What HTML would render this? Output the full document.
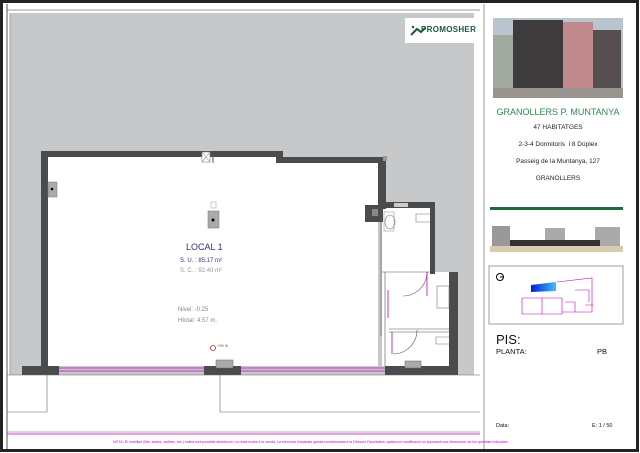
<!DOCTYPE html>
<html><head><meta charset="utf-8"><style>
html,body{margin:0;padding:0;}
body{width:640px;height:453px;position:relative;overflow:hidden;background:#fff;font-family:"Liberation Sans",Arial,sans-serif;}
.t{position:absolute;white-space:nowrap;}
</style></head><body>
<svg width="640" height="453" style="position:absolute;left:0;top:0">
<!-- outer border -->
<rect x="0" y="0" width="640" height="453" fill="#fff"/>
<rect x="1.5" y="1.5" width="636" height="449" fill="none" stroke="#222" stroke-width="3"/>
<line x1="7" y1="10" x2="480" y2="10" stroke="#777" stroke-width="0.8"/>
<line x1="7" y1="4" x2="7" y2="449" stroke="#555" stroke-width="1"/>
<line x1="484" y1="4" x2="484" y2="449" stroke="#999" stroke-width="1"/>
<!-- gray background -->
<rect x="9" y="13" width="465" height="362" fill="#c7c8c9"/>
<line x1="11" y1="15" x2="11" y2="375" stroke="#aaa" stroke-width="0.6"/>
<!-- interior -->
<rect x="48" y="157" width="330" height="209" fill="#fff"/>
<rect x="382" y="208" width="48" height="158" fill="#fff"/>
<rect x="385" y="272" width="65" height="94" fill="#fff"/>
<!-- walls -->
<g fill="#4a4b4c">
<rect x="41" y="151" width="7" height="222"/>
<rect x="41" y="151" width="242" height="6"/>
<rect x="276" y="151" width="4" height="11"/>
<rect x="276" y="157" width="110" height="6"/>
<rect x="378" y="157" width="8" height="52"/>
<rect x="365" y="205" width="18" height="17"/>
<rect x="382" y="202" width="53" height="6"/>
<rect x="430" y="202" width="5" height="72"/>
<rect x="449" y="272" width="9" height="103"/>
<rect x="22" y="366" width="37" height="9"/>
<rect x="204" y="366" width="37" height="9"/>
<rect x="385" y="366" width="73" height="9"/>
</g>
<rect x="372" y="209" width="6" height="7" fill="#888"/>
<rect x="383" y="156" width="4" height="5" fill="#999"/>
<!-- columns and fixtures -->
<rect x="48" y="182" width="9" height="15" fill="#aaa" stroke="#777" stroke-width="0.5"/><circle cx="52" cy="189" r="1.3" fill="#000"/>
<rect x="208" y="211" width="11" height="17" fill="#aaa" stroke="#777" stroke-width="0.5"/><circle cx="213" cy="220" r="1.5" fill="#000"/>
<rect x="211" y="202" width="5" height="6" fill="#fff" stroke="#999" stroke-width="0.5"/>
<rect x="202" y="152" width="8" height="10" fill="#fff" stroke="#888" stroke-width="0.6"/><path d="M202 152L210 162M210 152L202 162" stroke="#888" stroke-width="0.6"/>
<line x1="213" y1="152" x2="213" y2="163" stroke="#555" stroke-width="1"/>
<rect x="216" y="360" width="17" height="8" fill="#aaa" stroke="#666" stroke-width="0.5"/>
<rect x="405" y="361" width="16" height="7" fill="#aaa" stroke="#666" stroke-width="0.5"/>
<rect x="394" y="203" width="14" height="4" fill="#ccc"/>
<!-- bathroom fixtures -->
<ellipse cx="390" cy="222" rx="5" ry="7" fill="none" stroke="#777" stroke-width="0.6"/>
<rect x="384" y="212" width="10" height="19" fill="none" stroke="#888" stroke-width="0.5"/>
<path d="M430 214h-14v8h14" fill="none" stroke="#777" stroke-width="0.6"/>
<rect x="437" y="286" width="12" height="22" fill="none" stroke="#777" stroke-width="0.6"/>
<path d="M449 337h-13v7h13" fill="none" stroke="#777" stroke-width="0.6"/>
<g stroke="#555" stroke-width="0.6" fill="none">
<path d="M381 208v128M385 272v94M382 272h48M389 329h61M389 332h61"/>
<path d="M427 272a24 24 0 0 1 -24 24"/>
<path d="M417 330a24 24 0 0 1 -24 24"/>
</g>
<g stroke="#c000c0" stroke-width="0.8" fill="none">
<path d="M427 272v24M388 290v28M392 332v22"/>
<line x1="59" y1="368" x2="204" y2="368"/><line x1="59" y1="371" x2="204" y2="371"/>
<line x1="241" y1="368" x2="385" y2="368"/><line x1="241" y1="371" x2="385" y2="371"/>
<line x1="7" y1="434" x2="480" y2="434"/>
</g>
<circle cx="213" cy="348" r="2.5" fill="none" stroke="#d02020" stroke-width="0.8"/>
<text x="217" y="347" font-size="4" fill="#555" font-family="Liberation Sans">+90 III</text>
<!-- lower lines -->
<g stroke="#666" stroke-width="0.6" fill="none">
<path d="M7 375h473M7 412h40v-37M220 375v37h260M7 432h473"/>
</g>
<!-- logo box -->
<rect x="405" y="18" width="72" height="25" fill="#fff"/>
<path d="M411 35l6-6 4 3 4-4" stroke="#1b5a3a" stroke-width="2" fill="none"/>
<circle cx="413" cy="27" r="1.2" fill="#1b5a3a"/>
<!-- right panel images -->
<rect x="493" y="18" width="130" height="80" fill="#b9c4cf"/>
<rect x="493" y="35" width="20" height="55" fill="#a0a8a0"/>
<rect x="513" y="20" width="50" height="70" fill="#3e3b3c"/>
<rect x="563" y="22" width="30" height="68" fill="#c08a8c"/>
<rect x="593" y="30" width="28" height="60" fill="#574e50"/>
<rect x="493" y="88" width="130" height="10" fill="#9a9490"/>
<rect x="490" y="207" width="133" height="3" fill="#1f6b3f"/>
<rect x="490" y="222" width="133" height="32" fill="#fff"/>
<rect x="492" y="226" width="18" height="22" fill="#999"/>
<rect x="545" y="228" width="20" height="18" fill="#aaa"/>
<rect x="595" y="227" width="25" height="20" fill="#aaa"/>
<rect x="490" y="246" width="133" height="6" fill="#d8ccb0"/>
<rect x="510" y="240" width="90" height="6" fill="#333"/>
<rect x="489" y="266" width="134" height="58" fill="#fff" stroke="#888" stroke-width="0.8"/>
<circle cx="500" cy="277" r="3.5" fill="none" stroke="#000" stroke-width="1"/>
<path d="M500 277h3" stroke="#000"/>
<defs><linearGradient id="g"><stop offset="0" stop-color="#0020d0"/><stop offset="1" stop-color="#40c0ff"/></linearGradient></defs>
<path d="M531 285l25-3v9l-25 1z" fill="url(#g)"/>
<g stroke="#c000c0" stroke-width="0.6" fill="none">
<path d="M522 298h40v16h-40zM542 298v16M557 282l35-4v34h-30M575 290h14v12M565 302h10v10M585 305h8"/>
</g>
</svg>
<div class="t" style="left:421px;top:25px;font-size:8px;font-weight:bold;color:#1b5a3a;letter-spacing:0.3px">PROMOSHER</div>
<div class="t" style="left:186px;top:242px;font-size:9px;color:#303090">LOCAL 1</div>
<div class="t" style="left:180px;top:258px;font-size:6px;color:#303090">S. U. : 85.17 m²</div>
<div class="t" style="left:180px;top:268px;font-size:6px;color:#999">S. C. : 92.40 m²</div>
<div class="t" style="left:178px;top:307px;font-size:6px;color:#888">Nivel: -0.25</div>
<div class="t" style="left:178px;top:318px;font-size:6px;color:#888">Htotal: 4.57 m.</div>
<div class="t" style="left:113px;top:440px;font-size:3.6px;color:#c000c0">NOTA: El mobiliari (llits, taules, cadires, etc.) indica una possible distribució i no està inclòs a la venda. La memòria d'acabats queda condicionada a la Direcció Facultativa: qualsevol modificació no suposarà una disminució de les qualitats indicades.</div>
<div class="t" style="left:491px;top:107px;width:134px;text-align:center;font-size:9px;color:#2e8b4e">GRANOLLERS P. MUNTANYA</div>
<div class="t" style="left:491px;top:124px;width:134px;text-align:center;font-size:6.5px;color:#222">47 HABITATGES</div>
<div class="t" style="left:491px;top:141px;width:134px;text-align:center;font-size:6.5px;color:#222">2-3-4 Dormitoris &nbsp;i 8 Dúplex</div>
<div class="t" style="left:491px;top:158px;width:134px;text-align:center;font-size:6.5px;color:#222">Passeig de la Muntanya, 127</div>
<div class="t" style="left:491px;top:175px;width:134px;text-align:center;font-size:6.5px;color:#222">GRANOLLERS</div>
<div class="t" style="left:496px;top:332px;font-size:13px;color:#111">PIS:</div>
<div class="t" style="left:496px;top:347px;font-size:7.5px;color:#111">PLANTA:</div>
<div class="t" style="left:597px;top:347px;font-size:7.5px;color:#111">PB</div>
<div class="t" style="left:496px;top:423px;font-size:5.5px;color:#111">Data:</div>
<div class="t" style="left:592px;top:423px;font-size:5.5px;color:#111">E: 1 / 50</div>
</body></html>
